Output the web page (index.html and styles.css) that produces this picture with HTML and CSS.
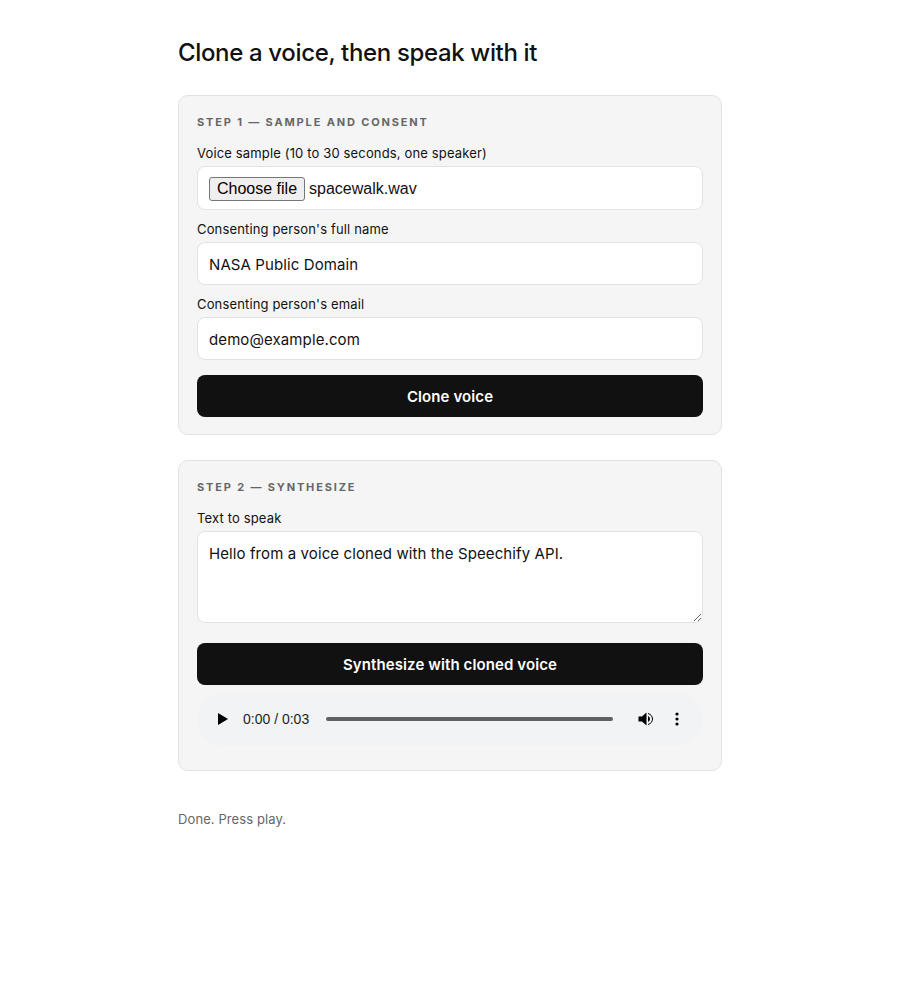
FILE: index.html
```html
<!DOCTYPE html>
<html lang="en">
<head>
  <meta charset="UTF-8">
  <meta name="viewport" content="width=device-width, initial-scale=1.0">
  <title>Clone a voice</title>
  <link rel="stylesheet" href="styles.css">
</head>
<body>
  <main class="page">
    <h1 class="title">Clone a voice, then speak with it</h1>

    <section class="card card-first">
      <h2 class="step">Step 1 — Sample and consent</h2>
      <label class="field-label">Voice sample (10 to 30 seconds, one speaker)</label>
      <div class="file-input">
        <button class="file-button" type="button">Choose file</button>
        <span class="file-name">spacewalk.wav</span>
      </div>
      <label class="field-label">Consenting person's full name</label>
      <input class="text-input" type="text" value="NASA Public Domain">
      <label class="field-label">Consenting person's email</label>
      <input class="text-input" type="email" value="demo@example.com">
      <button class="primary" type="button">Clone voice</button>
    </section>

    <section class="card card-second">
      <h2 class="step">Step 2 — Synthesize</h2>
      <label class="field-label">Text to speak</label>
      <textarea class="text-area">Hello from a voice cloned with the Speechify API.</textarea>
      <button class="primary primary-second" type="button">Synthesize with cloned voice</button>
      <div class="player">
        <svg class="play-icon" viewBox="0 0 10 12" width="10" height="12"><path d="M0 0 L10 6 L0 12 Z"/></svg>
        <span class="player-time">0:00 / 0:03</span>
        <div class="player-track"></div>
        <svg class="volume-icon" viewBox="0 0 16 16" width="16" height="16"><path d="M0.5 5.5 H4 L8.5 1.5 V14.5 L4 10.5 H0.5 Z"/><path d="M10 5 C11.4 5.8 12 6.8 12 8 C12 9.2 11.4 10.2 10 11 Z"/><path d="M10 2.5 C12.8 3.3 14.5 5.4 14.5 8 C14.5 10.6 12.8 12.7 10 13.5" fill="none" stroke="#000"/></svg>
        <svg class="menu-icon" viewBox="0 0 4 14" width="4" height="14"><circle cx="2" cy="2" r="1.6"/><circle cx="2" cy="7" r="1.6"/><circle cx="2" cy="12" r="1.6"/></svg>
      </div>
    </section>

    <p class="status">Done. Press play.</p>
  </main>
</body>
</html>
```

FILE: styles.css
```css
* {
  box-sizing: border-box;
}
body {
  margin: 0;
  background-color: #fff;
  color: #111;
  font-family: Inter, "Liberation Sans", sans-serif;
}
.page {
  width: 544px;
  margin: 0 auto;
  padding-top: 38px;
}
.title {
  margin: 0 0 28px;
  font-size: 24px;
  line-height: 29px;
  font-weight: 500;
  letter-spacing: -0.35px;
}
.card {
  display: flex;
  flex-direction: column;
  padding: 18px;
  background-color: #f5f5f5;
  border: 1px solid #e2e2e2;
  border-radius: 10px;
}
.card > * {
  flex: none;
}
.card-first {
  height: 340px;
  margin-bottom: 25px;
}
.card-second {
  height: 311px;
}
.step {
  margin: 0 0 15px;
  font-size: 11px;
  line-height: 16px;
  font-weight: 700;
  letter-spacing: 1.85px;
  text-transform: uppercase;
  color: #666;
}
.field-label {
  display: block;
  margin-bottom: 5px;
  font-size: 13px;
  line-height: 16px;
  letter-spacing: 0.15px;
  color: #111;
}
.file-input,
.text-input,
.text-area {
  width: 100%;
  background-color: #fff;
  border: 1px solid #e2e2e2;
  border-radius: 8px;
  padding: 12px 11px 10px;
  font-family: Inter, "Liberation Sans", sans-serif;
  font-size: 15px;
  letter-spacing: 0.1px;
  color: #111;
}
.file-input {
  display: flex;
  align-items: center;
  height: 44px;
  margin-bottom: 11px;
}
.file-button {
  height: 24px;
  padding: 0 7px;
  margin-right: 4px;
  font-family: "Liberation Sans", sans-serif;
  font-size: 16px;
  color: #000;
  background-color: #efefef;
  border: 1px solid #767676;
  border-radius: 3px;
}
.file-name {
  font-family: "Liberation Sans", sans-serif;
  font-size: 16px;
  letter-spacing: 0;
}
.text-input {
  height: 43px;
  margin-bottom: 11px;
}
.text-area {
  display: block;
  height: 92px;
  line-height: 19px;
  resize: vertical;
  margin-bottom: 20px;
}
.primary {
  width: 100%;
  height: 42px;
  margin-top: 4px;
  background-color: #111;
  color: #fff;
  border: none;
  border-radius: 8px;
  font-family: Inter, "Liberation Sans", sans-serif;
  font-size: 15px;
  font-weight: 600;
  letter-spacing: 0.1px;
}
.primary-second {
  margin-top: 0;
}
.player {
  display: flex;
  align-items: center;
  height: 54px;
  margin-top: 7px;
  padding: 0 21px;
  background-color: #f1f3f4;
  border-radius: 27px;
}
.play-icon {
  flex: none;
}
.player-time {
  margin-left: 15px;
  width: 83px;
  font-family: "Liberation Sans", sans-serif;
  font-size: 14px;
  color: #1f1f1f;
}
.player-track {
  width: 287px;
  height: 4px;
  background-color: #5f6064;
  border-radius: 2px;
}
.volume-icon {
  margin-left: 25px;
  flex: none;
}
.menu-icon {
  margin-left: 21px;
  flex: none;
}
.status {
  margin: 40px 0 0;
  font-size: 13px;
  line-height: 16px;
  letter-spacing: 0.1px;
  color: #666;
}
```
